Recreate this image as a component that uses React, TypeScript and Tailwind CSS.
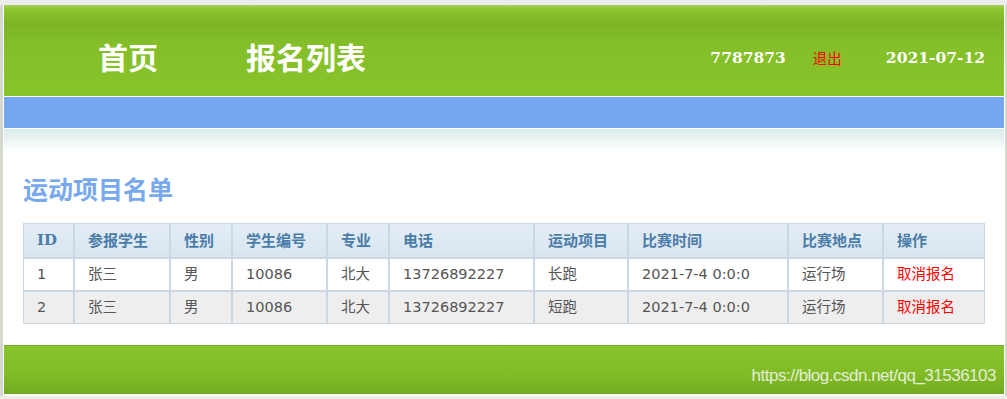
import React from 'react';

const cjk = { fontFamily: '"Noto Sans CJK SC", "Noto Sans", sans-serif' };
const serif = { fontFamily: '"DejaVu Serif", "Noto Sans CJK SC", serif' };
const body = { fontFamily: '"DejaVu Sans", "Noto Sans CJK SC", sans-serif' };

interface Entry {
  id: number;
  name: string;
  sex: string;
  no: string;
  major: string;
  phone: string;
  sport: string;
  time: string;
  place: string;
}

const entries: Entry[] = [
  { id: 1, name: '张三', sex: '男', no: '10086', major: '北大', phone: '13726892227', sport: '长跑', time: '2021-7-4 0:0:0', place: '运行场' },
  { id: 2, name: '张三', sex: '男', no: '10086', major: '北大', phone: '13726892227', sport: '短跑', time: '2021-7-4 0:0:0', place: '运行场' },
];

function TopBar() {
  return (
    <div className="flex h-[91px] items-center bg-[linear-gradient(to_bottom,#a9d266_0px,#8cc52e_4px,#7db427_20px,#84bf29_40px,#88c32a_100%)] pt-[12px]">
      <nav className="ml-[94px] flex gap-[88px] text-[30px] font-bold text-white" style={cjk}>
        <span>首页</span>
        <span>报名列表</span>
      </nav>
      <div className="ml-auto mr-[19px] flex items-center pt-[2px]">
        <span className="text-[15.5px] font-bold text-white" style={serif}>7787873</span>
        <span className="ml-[27px] text-[14.5px] text-[#ff0000]" style={cjk}>退出</span>
        <span className="ml-[44px] text-[15.5px] font-bold text-white" style={serif}>2021-07-12</span>
      </div>
    </div>
  );
}

function SignupTable() {
  const th = 'h-[35px] border border-[#cbd7e2] bg-[linear-gradient(to_bottom,#e4edf5,#d8e5f0)] text-left text-[15px] font-bold text-[#4a7ca9]';
  const td = 'h-[33px] border border-[#cbd7e2] text-[14.5px] text-[#555]';
  return (
    <table className="w-[962px] table-fixed border-separate border-spacing-0" style={body}>
      <thead>
        <tr style={cjk}>
          <th className={`${th} w-[51px] pl-[13px]`} style={serif}>ID</th>
          <th className={`${th} w-[96px] pl-[13px]`}>参报学生</th>
          <th className={`${th} w-[62px] pl-[13px]`}>性别</th>
          <th className={`${th} w-[95px] pl-[13px]`}>学生编号</th>
          <th className={`${th} w-[62px] pl-[13px]`}>专业</th>
          <th className={`${th} w-[145px] pl-[13px]`}>电话</th>
          <th className={`${th} w-[94px] pl-[13px]`}>运动项目</th>
          <th className={`${th} w-[160px] pl-[13px]`}>比赛时间</th>
          <th className={`${th} w-[95px] pl-[13px]`}>比赛地点</th>
          <th className={`${th} w-[102px] pl-[13px]`}>操作</th>
        </tr>
      </thead>
      <tbody>
        {entries.map((e, i) => (
          <tr key={e.id} className={i % 2 === 1 ? 'bg-[#eeeeee]' : 'bg-white'}>
            <td className={`${td} pl-[13px]`}>{e.id}</td>
            <td className={`${td} pl-[13px]`}>{e.name}</td>
            <td className={`${td} pl-[13px]`}>{e.sex}</td>
            <td className={`${td} pl-[13px]`}>{e.no}</td>
            <td className={`${td} pl-[13px]`}>{e.major}</td>
            <td className={`${td} pl-[13px]`}>{e.phone}</td>
            <td className={`${td} pl-[13px]`}>{e.sport}</td>
            <td className={`${td} pl-[13px]`}>{e.time}</td>
            <td className={`${td} pl-[13px]`}>{e.place}</td>
            <td className={`${td} pl-[13px] text-[#ff0000]`}>取消报名</td>
          </tr>
        ))}
      </tbody>
    </table>
  );
}

export default function App() {
  return (
    <div className="h-[399px] w-[1007px] overflow-hidden bg-[#ececec] pt-[5px]">
      <div className="border-l-[3px] border-r-[2px] border-l-[#d3d9cf] border-r-[#d3d9cf] bg-white px-px pb-[2px]">
        <TopBar />
        <div className="mt-px h-[31px] bg-[#75a7f1]" />
        <div className="mt-px h-[22px] bg-[linear-gradient(to_bottom,#d7ebe8,#ffffff)]" />

        <div className="pl-[19px]">
          <h2 className="mt-[20px] text-[25px] font-bold leading-[34px] text-[#78a8ee]" style={cjk}>
            运动项目名单
          </h2>
          <div className="mt-[18px]">
            <SignupTable />
          </div>
        </div>

        <div className="mt-[21px] flex h-[49px] items-end justify-end border-t border-[#74ac26] bg-[linear-gradient(to_bottom,#88c42c,#80bb26_60%,#72aa20)] pb-[6px] pr-[8px]">
          <span className="text-[17px] text-[#e3eed6]" style={{ fontFamily: '"Liberation Sans", Arial, sans-serif', letterSpacing: '-0.5px' }}>
            https://blog.csdn.net/qq_31536103
          </span>
        </div>
      </div>
    </div>
  );
}
